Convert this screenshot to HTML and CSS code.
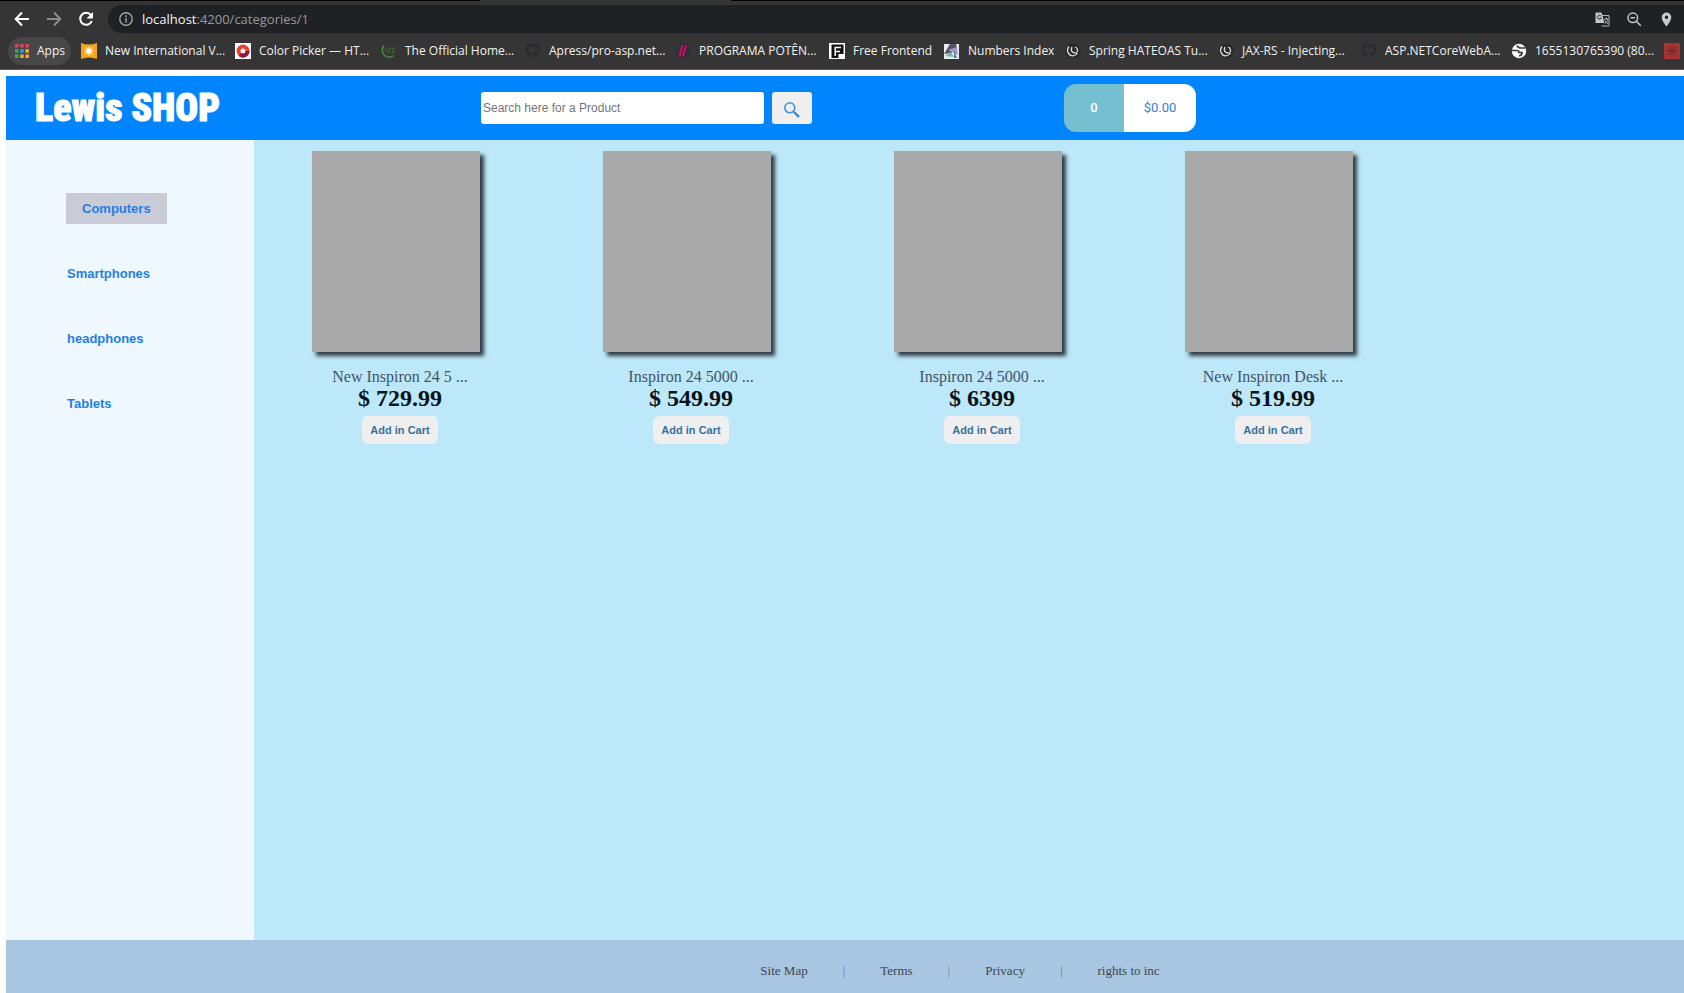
FILE: index.html
```html
<!DOCTYPE html>
<html lang="en">
<head>
<meta charset="utf-8">
<title>Lewis SHOP</title>
<link rel="stylesheet" href="styles.css">
</head>
<body>
<div class="browser">
  <div class="tab-strip"><span class="active-tab"></span></div>
  <div class="toolbar">
    <button class="nav-btn" aria-label="Back"><svg viewBox="0 0 16 16" width="16" height="16"><path d="M15 8H2M8 1.500L1.700 8L8 14.500" fill="none" stroke="#fff" stroke-width="2"/></svg></button>
    <button class="nav-btn" aria-label="Forward"><svg viewBox="0 0 16 16" width="16" height="16"><path d="M1 8H14M8 1.500L14.300 8L8 14.500" fill="none" stroke="#8a8b8d" stroke-width="2"/></svg></button>
    <button class="nav-btn" aria-label="Reload"><svg viewBox="0 0 16 16" width="16" height="16"><path d="M13 4.200A6 6 0 1 0 13.800 10" fill="none" stroke="#fff" stroke-width="2"/><path d="M15 1v6.500H8.500z" fill="#fff"/></svg></button>
    <div class="address">
      <svg viewBox="0 0 14 14" width="14" height="14"><circle cx="7" cy="7" r="6.200" fill="none" stroke="#a0a3a7" stroke-width="1.400"/><path d="M7 6v4.500M7 3.300v1.600" stroke="#a0a3a7" stroke-width="1.500"/></svg>
      <span class="url">localhost<span class="path">:4200/categories/1</span></span>
      <span class="tools">
        <svg viewBox="0 0 15 15" width="15" height="15"><path d="M7 3.500h7v10.500H6.500" fill="none" stroke="#aeb1b5"/><path d="M.5 .5H6.500L9.500 11H.5z" fill="#c4c6c9"/><path d="M6 4A2 2 0 1 0 6.300 6H4.500" fill="none" stroke="#333639"/><path d="M9 7h4.500M11.300 5.500V7M13 7C12.500 9 11.500 10.500 9.800 11.500M10 8.500l3 3.500" fill="none" stroke="#aeb1b5"/></svg>
        <svg viewBox="0 0 15 15" width="15" height="15"><circle cx="5.800" cy="5.800" r="4.800" fill="none" stroke="#c4c6c9" stroke-width="1.500"/><path d="M3.500 5.800h4.600M9.300 9.300l4.500 4.500" stroke="#c4c6c9" stroke-width="1.600"/></svg>
        <svg viewBox="0 0 15 15" width="15" height="15"><path fill-rule="evenodd" d="M7.500.5A4.800 4.800 0 0 0 2.700 5.300C2.700 9 7.500 14.500 7.500 14.500S12.300 9 12.300 5.300A4.800 4.800 0 0 0 7.500.5zM7.500 3.600a1.700 1.700 0 1 1 0 3.400a1.700 1.700 0 0 1 0-3.400z" fill="#c8cacd"/></svg>
      </span>
    </div>
  </div>
  <nav class="bookmarks">
    <a class="apps" href="#"><svg viewBox="0 0 14 14" width="14" height="14"><path d="M0 0h3.500v3.500H0zM5.200 0h3.500v3.500H5.200zM10.400 0h3.500v3.500h-3.500z" fill="#d9485c"/><path d="M0 5.200h3.500v3.500H0z" fill="#49a45d"/><path d="M5.200 5.200h3.500v3.500H5.200z" fill="#3597ea"/><path d="M10.400 5.200h3.500v3.500h-3.500zM5.200 10.400h3.500v3.500H5.200zM10.400 10.400h3.500v3.500h-3.500z" fill="#efae36"/><path d="M0 10.400h3.500v3.500H0z" fill="#49a45d"/></svg>Apps</a>
    <a href="#"><svg viewBox="0 0 16 16" width="16" height="16"><path d="M0 0Q8 3 16 0V16Q8 13 0 16z" fill="#f5a51c"/><path d="M8 3v10M3 8h10M4.500 4.500l7 7M11.500 4.500l-7 7" stroke="#ffe9b0" stroke-width="1.200"/><circle cx="8" cy="8" r="2.600" fill="#fff"/></svg>New International V...</a>
    <a href="#"><svg viewBox="0 0 16 16" width="16" height="16"><path d="M0 0h16v16H0z" fill="#fff"/><circle cx="8" cy="8" r="4.500" fill="none" stroke="#e9432f" stroke-width="4"/><path d="M12.500 8A4.500 4.500 0 0 1 5 11.400" fill="none" stroke="#8f1c3c" stroke-width="4"/></svg>Color Picker — HT...</a>
    <a href="#"><svg viewBox="0 0 16 16" width="16" height="16"><path d="M3 2.500C-1 8 3 15 9 14Q11 13.800 12.500 12.500" fill="none" stroke="#4d8d35" stroke-width="1.400"/><path d="M4.500 5v4.500M6.500 5h2.500v2h-2.300v2.500H9M10.500 5H13v4.500h-2.500M10.500 7H13" fill="none" stroke="#3c6c2c"/></svg>The Official Home...</a>
    <a href="#"><svg viewBox="0 0 16 16" width="16" height="16"><path d="M5.500 15V12.500Q2.500 13 2 11M10.500 15V12Q10.500 11 10 10.500C13 10 14 8.500 14 6.500Q14 5 13 4Q13.400 2.500 12.800 1.500Q11.500 1.500 10 2.700Q8 2 6 2.700Q4.500 1.500 3.200 1.500Q2.600 2.500 3 4Q2 5 2 6.500C2 8.500 3 10 6 10.500" fill="none" stroke="#282b2f" stroke-width="2"/></svg>Apress/pro-asp.net...</a>
    <a href="#"><svg viewBox="0 0 16 16" width="16" height="16"><circle cx="8" cy="8" r="7.500" fill="#2f3034"/><path d="M7.500 2.500L4.500 13.500M11 2.500L8 13.500" stroke="#e6006c" stroke-width="1.800"/></svg>PROGRAMA POTÊN...</a>
    <a href="#"><svg viewBox="0 0 16 16" width="16" height="16"><path d="M0 0h16v16H0z" fill="#fff"/><path d="M2.500 1.500H14.500v9.500H9.500v4H2.500z" fill="#111"/><path d="M6.200 13V4.500H12M6.200 8.500H11" fill="none" stroke="#fff" stroke-width="1.500"/></svg>Free Frontend</a>
    <a href="#"><svg viewBox="0 0 16 16" width="16" height="16"><path d="M0 1h15v15H0z" fill="#e9edf0"/><path d="M0 11L6 1H12L13 5L7 10z" fill="#5a5069"/><path d="M4 7l9-3 1 8z" fill="#a796c8"/><path d="M1 13L7 9L10 14z" fill="#72bda0"/><path d="M10 7l3 8h-3z" fill="#557da4"/></svg>Numbers Index</a>
    <a href="#"><svg viewBox="0 0 16 16" width="16" height="16"><circle cx="8" cy="8" r="7.500" fill="#292a2c"/><path d="M4 3.500C.5 8 4 13 8 12.800Q11 12.500 12.500 10M7 4C5 8 8 11 12 9.500M10 4Q13 5 12.500 9" fill="none" stroke="#ddd" stroke-width="1.300"/></svg>Spring HATEOAS Tu...</a>
    <a href="#"><svg viewBox="0 0 16 16" width="16" height="16"><circle cx="8" cy="8" r="7.500" fill="#292a2c"/><path d="M4 3.500C.5 8 4 13 8 12.800Q11 12.500 12.500 10M7 4C5 8 8 11 12 9.500M10 4Q13 5 12.500 9" fill="none" stroke="#ddd" stroke-width="1.300"/></svg>JAX-RS - Injecting...</a>
    <a href="#"><svg viewBox="0 0 16 16" width="16" height="16"><path d="M5.500 15V12.500Q2.500 13 2 11M10.500 15V12Q10.500 11 10 10.500C13 10 14 8.500 14 6.500Q14 5 13 4Q13.400 2.500 12.800 1.500Q11.500 1.500 10 2.700Q8 2 6 2.700Q4.500 1.500 3.200 1.500Q2.600 2.500 3 4Q2 5 2 6.500C2 8.500 3 10 6 10.500" fill="none" stroke="#282b2f" stroke-width="2"/></svg>ASP.NETCoreWebA...</a>
    <a href="#"><svg viewBox="0 0 16 16" width="16" height="16"><circle cx="8" cy="8" r="7.200" fill="#fff"/><path d="M1 7.500H6Q8 7.500 8 9.500H11Q11 12.500 8 13M6 2.500Q7 5 9.500 5H14" fill="none" stroke="#35363a" stroke-width="1.700"/></svg>1655130765390 (80...</a>
    <a href="#" aria-label="Bookmark"><svg viewBox="0 0 16 16" width="16" height="16"><path d="M0 0h16v16H0z" fill="#a93434"/><path d="M8 8Q3 7 5 2M8 8Q9 3 14 5M8 8Q13 9 11 14M8 8Q7 13 2 11M8 8Q5 10 2 7M8 8Q6 5 9 2M8 8Q11 6 14 9M8 8Q10 11 7 14" fill="none" stroke="#662529" stroke-width=".8"/></svg></a>
  </nav>
</div>
<div class="page">
  <header class="header">
    <h1 class="logo">Lewis SHOP</h1>
    <form class="search">
      <input type="text" placeholder="Search here for a Product" aria-label="Search here for a Product">
      <button type="button" aria-label="Search"><svg viewBox="0 0 18 18" width="18" height="18"><circle cx="6.800" cy="6.800" r="5" fill="none" stroke="#3d95d2" stroke-width="1.600"/><path d="M10.500 10.500l1.500 1.500" stroke="#3d95d2" stroke-width="1.500"/><path d="M11.500 11.500l4.500 4.500" stroke="#3485bd" stroke-width="2.400"/></svg></button>
    </form>
    <div class="cart"><span class="cart-count">0</span><span class="cart-total">$0.00</span></div>
  </header>
  <div class="content">
    <nav class="sidebar">
      <a class="active" href="#">Computers</a>
      <a href="#">Smartphones</a>
      <a href="#">headphones</a>
      <a href="#">Tablets</a>
    </nav>
    <main class="products">
      <article class="product"><div class="photo"></div><p class="name">New Inspiron 24 5 ...</p><p class="price">$ 729.99</p><button type="button">Add in Cart</button></article>
      <article class="product"><div class="photo"></div><p class="name">Inspiron 24 5000 ...</p><p class="price">$ 549.99</p><button type="button">Add in Cart</button></article>
      <article class="product"><div class="photo"></div><p class="name">Inspiron 24 5000 ...</p><p class="price">$ 6399</p><button type="button">Add in Cart</button></article>
      <article class="product"><div class="photo"></div><p class="name">New Inspiron Desk ...</p><p class="price">$ 519.99</p><button type="button">Add in Cart</button></article>
    </main>
  </div>
  <footer class="footer">
    <a href="#">Site Map</a><span>|</span><a href="#">Terms</a><span>|</span><a href="#">Privacy</a><span>|</span><a href="#">rights to inc</a>
  </footer>
</div>
</body>
</html>
```
FILE: styles.css
```css
* { box-sizing: border-box; }

body {
  margin: 0;
  min-height: 100vh;
  display: flex;
  flex-direction: column;
  overflow-x: hidden;
  background: #fff;
  font-family: "Liberation Serif", "Times New Roman", serif;
}

a { text-decoration: none; color: inherit; }
button { border: 0; padding: 0; cursor: pointer; }
h1, p { margin: 0; }
svg { display: block; flex: none; }

/* Browser bar */
.browser {
  background: #353535;
  border-bottom: 1px solid #5c5c5c;
  font-family: "Open Sans", "Segoe UI", sans-serif;
  color: #f1f1f1;
}
.tab-strip { height: 1px; background: #000; padding-left: 480px; }
.active-tab { display: block; width: 251px; height: 1px; background: #353535; }

.toolbar {
  display: flex;
  align-items: center;
  gap: 16px;
  height: 32px;
  padding: 4px 0 0 14px;
}
.nav-btn { background: none; width: 16px; height: 16px; }

.address {
  flex: 1;
  display: flex;
  align-items: center;
  gap: 9px;
  height: 28px;
  margin-left: -2px;
  padding: 0 10px 0 11px;
  border-radius: 14px 0 0 14px;
  background: #202124;
}
.url { font-size: 13px; line-height: 20px; }
.path { color: #96999d; }
.tools { display: flex; gap: 17px; margin-left: auto; }

.bookmarks {
  display: grid;
  grid-template-columns: 73px 154px 146px 144px 150px 154px 115px 121px 153px 143px 150px 153px 20px;
  align-items: center;
  height: 36px;
  padding-left: 8px;
  overflow: hidden;
  font-size: 12px;
  line-height: 16px;
  white-space: nowrap;
}
.bookmarks a { display: flex; align-items: center; gap: 8px; }
.bookmarks .apps {
  justify-self: start;
  height: 28px;
  padding: 0 6px 0 7px;
  border-radius: 14px;
  background: #474747;
}

/* Shop */
.page {
  flex: 1;
  display: flex;
  flex-direction: column;
  margin: 6px 0 0 6px;
}

.header {
  display: grid;
  grid-template-columns: 475fr 583fr 620fr;
  align-items: center;
  height: 64px;
  background: #0085ff;
  font-family: "Liberation Sans", Arial, sans-serif;
}
.logo {
  padding-left: 29px;
  font-family: Impact, "Roboto Condensed", sans-serif;
  font-size: 38px;
  font-weight: 900;
  line-height: 48px;
  color: #fff;
  -webkit-text-stroke: 1px #fff;
  white-space: nowrap;
}

.search { display: flex; gap: 8px; }
.search input {
  width: 283px;
  height: 32px;
  padding: 0 2px;
  border: 0;
  border-radius: 3px;
  background: #fff;
  font-family: inherit;
  font-size: 12px;
}
.search input::placeholder { color: #757575; }
.search button {
  display: flex;
  align-items: center;
  justify-content: center;
  width: 40px;
  height: 32px;
  padding-top: 3px;
  border-radius: 3px;
  background: #efefef;
}

.cart {
  display: flex;
  width: 132px;
  height: 48px;
  border-radius: 12px;
  overflow: hidden;
  font-family: Roboto, sans-serif;
  font-size: 13px;
  line-height: 48px;
  text-align: center;
}
.cart-count { width: 60px; background: #76bfd0; color: #fff; font-weight: 500; }
.cart-total { flex: 1; background: #fff; color: #397ce0; }

.content { flex: 1; display: flex; }

.sidebar {
  display: flex;
  flex-direction: column;
  align-items: flex-start;
  gap: 34px;
  width: 248px;
  padding: 53px 0 0 60px;
  background: #eff8ff;
  font-family: "Liberation Sans", Arial, sans-serif;
  font-size: 13px;
  font-weight: bold;
  line-height: 31px;
  color: #1f7fe5;
}
.sidebar a { padding-left: 1px; }
.sidebar .active { padding: 0 16px; background: #c9ccd7; }

.products {
  flex: 1;
  display: flex;
  flex-wrap: wrap;
  align-content: flex-start;
  padding-top: 11px;
  background: #bde8f9;
}
.product {
  display: flex;
  flex-direction: column;
  align-items: center;
  width: 291px;
  padding: 0 57px 0 58px;
}
.photo {
  align-self: flex-start;
  width: 168px;
  height: 201px;
  margin-bottom: 16px;
  background: #a9a9a9;
  box-shadow: 4px 4px 4px #2f3c44;
}
.name { font-size: 16px; line-height: 18px; color: #405468; white-space: nowrap; }
.price { font-size: 24px; line-height: 24px; font-weight: bold; color: #07131a; }
.product button {
  height: 28px;
  margin-top: 6px;
  padding: 0 8px;
  border-radius: 6px;
  background: #efefef;
  font-family: "Liberation Sans", Arial, sans-serif;
  font-size: 11px;
  font-weight: bold;
  color: #386f9f;
}

.footer {
  display: flex;
  justify-content: center;
  gap: 35px;
  height: 53px;
  padding: 23px 0 0 230px;
  background: #a8c6e2;
  font-size: 13px;
  line-height: 16px;
  color: #3b464f;
}
.footer span { color: #68839c; }
```
